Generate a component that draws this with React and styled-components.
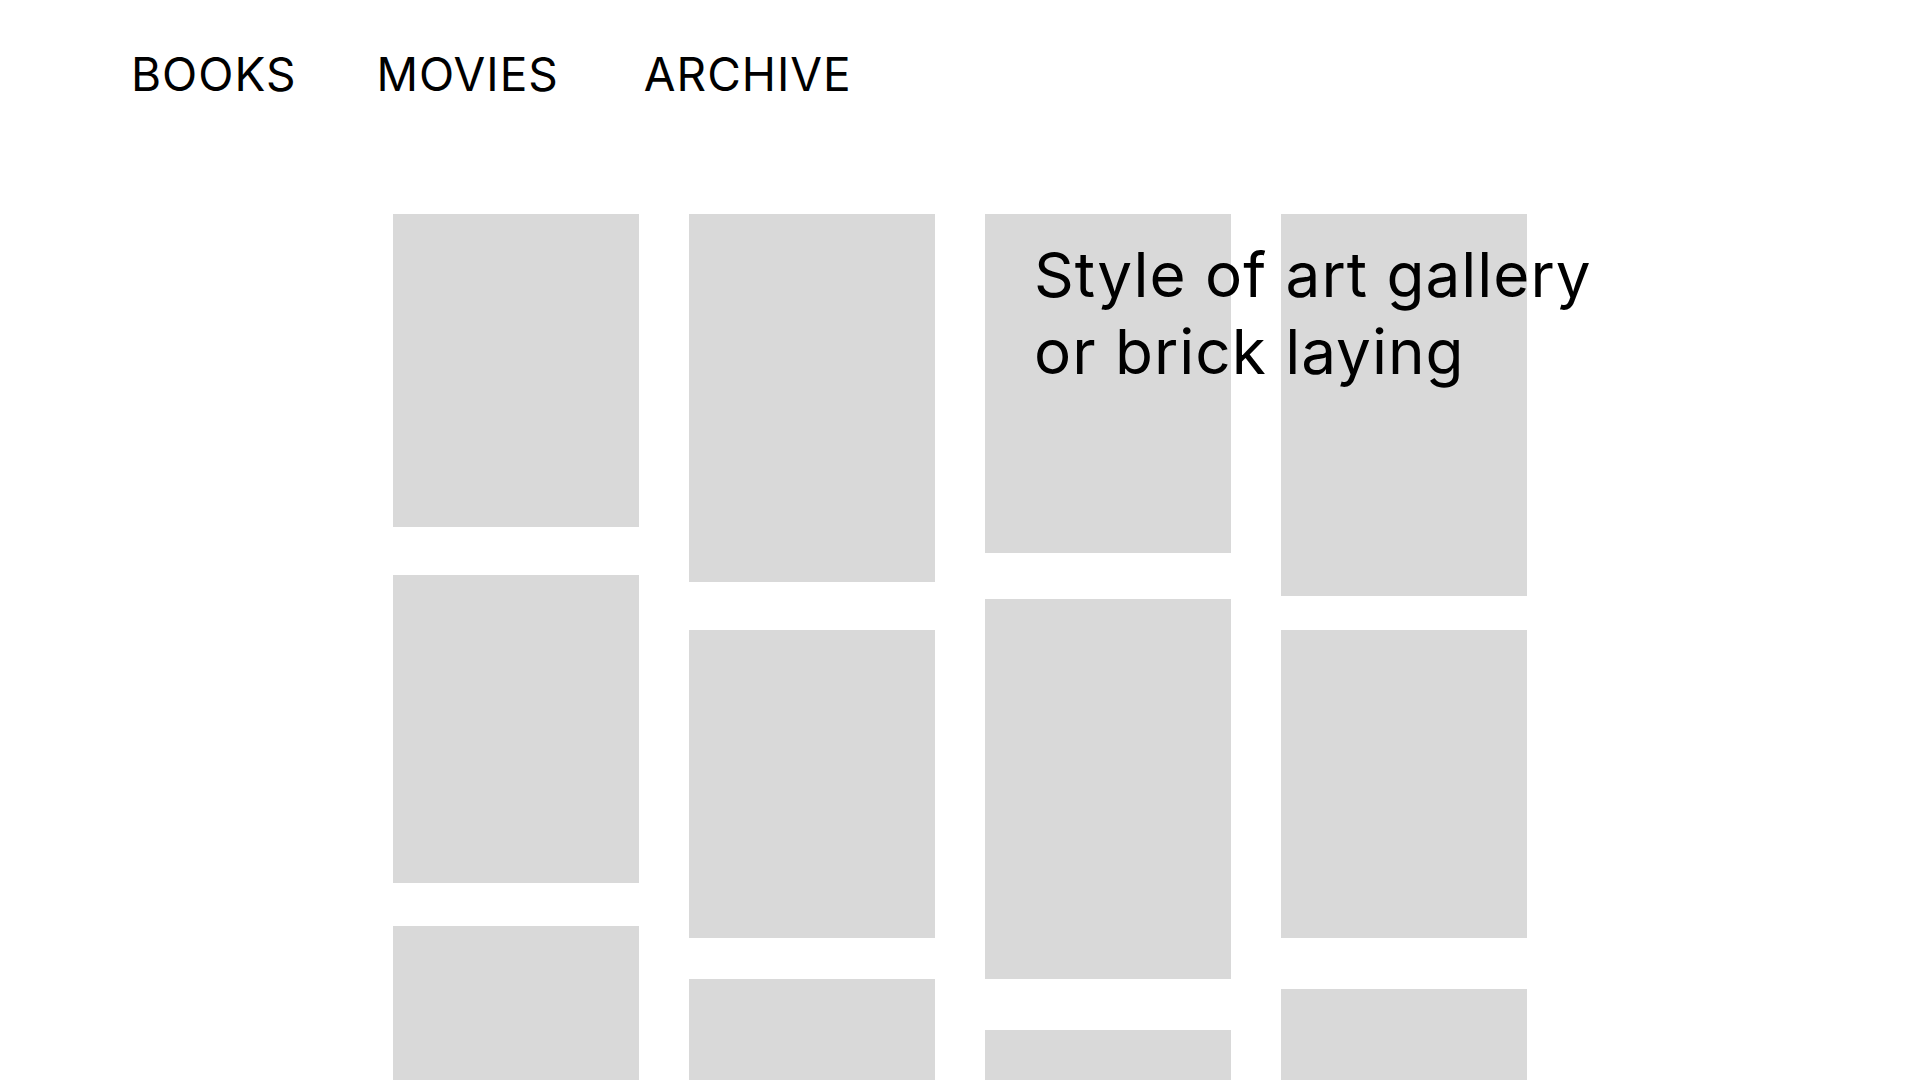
import React from 'react';
import styled, { createGlobalStyle } from 'styled-components';

const GlobalStyle = createGlobalStyle`
  html, body {
    margin: 0;
    padding: 0;
    height: 1080px;
    overflow: hidden;
    background: #ffffff;
  }
  body {
    font-family: Inter, "Liberation Sans", sans-serif;
    color: #000000;
  }
`;

const Page = styled.div`
  width: 1920px;
  height: 1080px;
  overflow: hidden;
`;

const Nav = styled.nav`
  display: flex;
  align-items: baseline;
  padding: 47px 0 0 131px;
`;

const NavLink = styled.a`
  font-size: 46px;
  font-weight: 400;
  line-height: 1.21;
  letter-spacing: 1px;
  color: #000;
  text-decoration: none;
  margin-right: ${(p) => p.$space}px;
  cursor: pointer;
`;

const Gallery = styled.div`
  position: relative;
  display: grid;
  grid-template-columns: repeat(4, 246px);
  column-gap: 50px;
  justify-content: center;
  margin-top: 111px;
`;

const Column = styled.div`
  display: flex;
  flex-direction: column;
`;

const Tile = styled.div`
  background: #d9d9d9;
  height: ${(p) => p.$h}px;
  margin-bottom: ${(p) => p.$gap}px;
  flex-shrink: 0;
`;

const Caption = styled.h1`
  position: absolute;
  top: 22px;
  left: 1034px;
  margin: 0;
  font-size: 62px;
  font-weight: 400;
  line-height: 77px;
  letter-spacing: 1px;
  white-space: nowrap;
`;

const columns = [
  [{ h: 313, gap: 48 }, { h: 308, gap: 43 }, { h: 300, gap: 40 }],
  [{ h: 368, gap: 48 }, { h: 308, gap: 41 }, { h: 300, gap: 40 }],
  [{ h: 339, gap: 46 }, { h: 380, gap: 51 }, { h: 300, gap: 40 }],
  [{ h: 382, gap: 34 }, { h: 308, gap: 51 }, { h: 300, gap: 40 }],
];

export default function App() {
  return (
    <Page>
      <GlobalStyle />
      <Nav>
        <NavLink $space={80}>BOOKS</NavLink>
        <NavLink $space={85}>MOVIES</NavLink>
        <NavLink $space={0}>ARCHIVE</NavLink>
      </Nav>
      <Gallery>
        {columns.map((col, i) => (
          <Column key={i}>
            {col.map((t, j) => (
              <Tile key={j} $h={t.h} $gap={t.gap} />
            ))}
          </Column>
        ))}
        <Caption>
          Style of art gallery
          <br />
          or brick laying
        </Caption>
      </Gallery>
    </Page>
  );
}
